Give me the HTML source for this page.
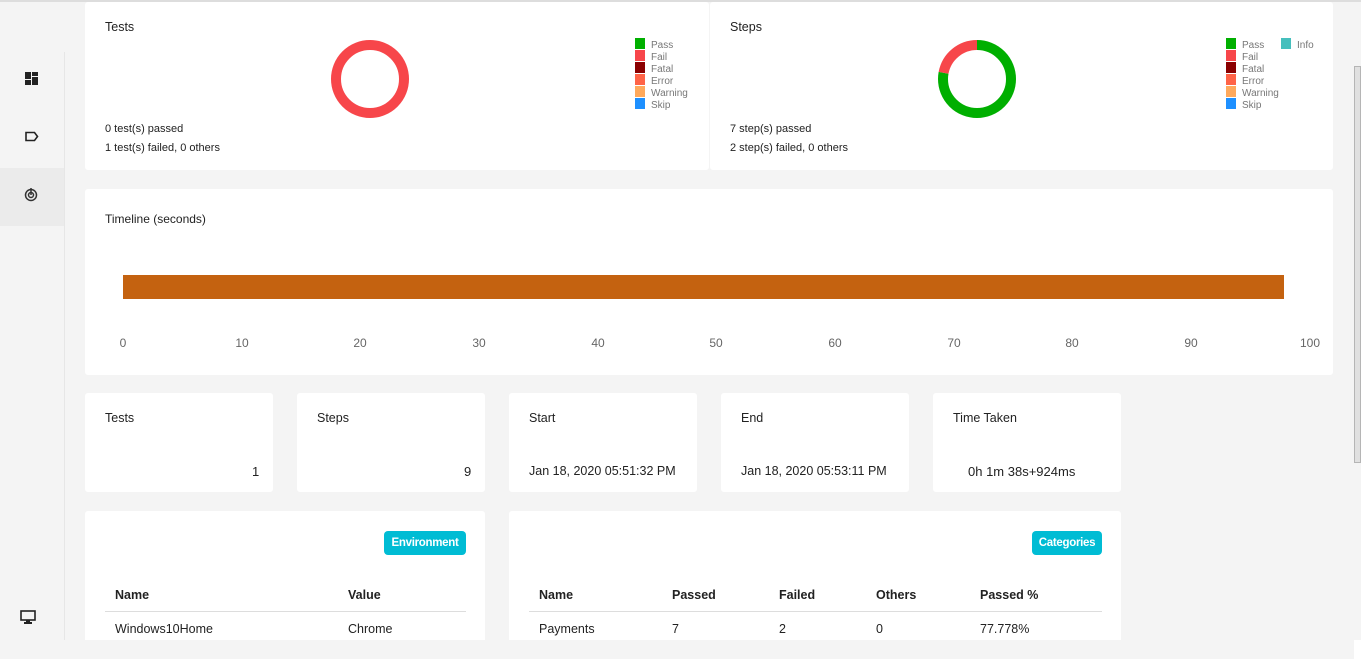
<!DOCTYPE html>
<html><head><meta charset="utf-8"><style>
*{margin:0;padding:0;box-sizing:border-box}
body{width:1361px;height:659px;background:#f4f4f4;font-family:"Liberation Sans",sans-serif;font-size:12px;color:#222;position:relative;overflow:hidden}
.a{position:absolute}
.card{position:absolute;background:#fff;border-radius:3px}
.t{position:absolute;font-size:12.5px;color:#222}
.lg{position:absolute;font-size:10px;color:#777;line-height:12px}
.lg div{height:12px;white-space:nowrap}
.lg i{display:inline-block;width:10px;height:11px;margin-right:6px;vertical-align:-1px}
.ax{position:absolute;top:336px;font-size:12px;color:#666;transform:translateX(-50%)}
.badge{position:absolute;background:#00bcd4;color:#fff;font-weight:bold;font-size:11.5px;border-radius:4px;height:24px;line-height:24px;text-align:center;white-space:nowrap;letter-spacing:-0.3px}
</style></head><body>
<div class="a" style="left:0;top:0;width:1361px;height:2px;background:#ddd"></div>
<div class="a" style="left:64px;top:52px;width:1px;height:588px;background:#e6e6e6"></div>
<div class="a" style="left:0;top:168px;width:64px;height:58px;background:#ebebeb"></div>
<svg class="a" style="left:25px;top:72px" width="13" height="13" viewBox="0 0 13 13"><rect x="0" y="0" width="6" height="7" fill="#222"/><rect x="7" y="0" width="6" height="4" fill="#222"/><rect x="0" y="8" width="6" height="5" fill="#222"/><rect x="7" y="5" width="6" height="8" fill="#222"/></svg>
<svg class="a" style="left:25px;top:131px" width="14" height="11" viewBox="0 0 14 11"><path d="M1 1.5h8.5l3 4-3 4H1z" fill="none" stroke="#222" stroke-width="1.6"/></svg>
<svg class="a" style="left:24px;top:187px" width="14" height="15" viewBox="0 0 14 15"><circle cx="7" cy="8" r="5.5" fill="none" stroke="#333" stroke-width="1.5"/><circle cx="7" cy="8" r="2.5" fill="none" stroke="#333" stroke-width="1.5"/><path d="M7 1v7" stroke="#333" stroke-width="1.5"/></svg>
<svg class="a" style="left:20px;top:610px" width="16" height="15" viewBox="0 0 16 15"><rect x="1" y="1" width="14" height="9" fill="none" stroke="#222" stroke-width="1.6"/><rect x="6" y="10" width="4" height="2" fill="#222"/><rect x="4" y="12" width="8" height="2" fill="#222"/></svg>

<div class="card" style="left:85px;top:2px;width:624px;height:168px"></div>
<div class="card" style="left:710px;top:2px;width:623px;height:168px"></div>
<div class="t" style="left:105px;top:20px">Tests</div>
<div class="t" style="left:730px;top:20px">Steps</div>
<svg class="a" style="left:330px;top:39px" width="80" height="80"><circle cx="40" cy="40" r="34" fill="none" stroke="#f7464a" stroke-width="10"/></svg>
<svg class="a" style="left:937px;top:39px" width="80" height="80"><g transform="rotate(-90 40 40)"><circle cx="40" cy="40" r="34" fill="none" stroke="#00af00" stroke-width="10" stroke-dasharray="166.2 300"/><circle cx="40" cy="40" r="34" fill="none" stroke="#f7464a" stroke-width="10" stroke-dasharray="0 166.2 47.5 300"/></g></svg>
<div class="lg" style="left:635px;top:38px">
<div><i style="background:#00af00"></i>Pass</div><div><i style="background:#f7464a"></i>Fail</div><div><i style="background:#8b0000"></i>Fatal</div><div><i style="background:#ff6347"></i>Error</div><div><i style="background:#ffa95c"></i>Warning</div><div><i style="background:#1e90ff"></i>Skip</div></div>
<div class="lg" style="left:1226px;top:38px">
<div><i style="background:#00af00"></i>Pass</div><div><i style="background:#f7464a"></i>Fail</div><div><i style="background:#8b0000"></i>Fatal</div><div><i style="background:#ff6347"></i>Error</div><div><i style="background:#ffa95c"></i>Warning</div><div><i style="background:#1e90ff"></i>Skip</div></div>
<div class="lg" style="left:1281px;top:38px"><div><i style="background:#46bfbd"></i>Info</div></div>
<div class="t" style="left:105px;top:123px;font-size:11px">0 test(s) passed</div>
<div class="t" style="left:105px;top:142px;font-size:11px">1 test(s) failed, 0 others</div>
<div class="t" style="left:730px;top:123px;font-size:11px">7 step(s) passed</div>
<div class="t" style="left:730px;top:142px;font-size:11px">2 step(s) failed, 0 others</div>

<div class="card" style="left:85px;top:189px;width:1248px;height:186px"></div>
<div class="t" style="left:105px;top:212px;font-size:12px">Timeline (seconds)</div>
<div class="a" style="left:123px;top:275px;width:1161px;height:24px;background:#c46210"></div>
<div class="ax" style="left:123px">0</div><div class="ax" style="left:242px">10</div><div class="ax" style="left:360px">20</div><div class="ax" style="left:479px">30</div><div class="ax" style="left:598px">40</div><div class="ax" style="left:716px">50</div><div class="ax" style="left:835px">60</div><div class="ax" style="left:954px">70</div><div class="ax" style="left:1072px">80</div><div class="ax" style="left:1191px">90</div><div class="ax" style="left:1310px">100</div>

<div class="card" style="left:85px;top:393px;width:188px;height:99px"></div>
<div class="card" style="left:297px;top:393px;width:188px;height:99px"></div>
<div class="card" style="left:509px;top:393px;width:188px;height:99px"></div>
<div class="card" style="left:721px;top:393px;width:188px;height:99px"></div>
<div class="card" style="left:933px;top:393px;width:188px;height:99px"></div>
<div class="t" style="left:105px;top:411px">Tests</div>
<div class="t" style="left:317px;top:411px">Steps</div>
<div class="t" style="left:529px;top:411px">Start</div>
<div class="t" style="left:741px;top:411px">End</div>
<div class="t" style="left:953px;top:411px">Time Taken</div>
<div class="t" style="left:252px;top:464px;font-size:13px">1</div>
<div class="t" style="left:464px;top:464px;font-size:13px">9</div>
<div class="t" style="left:529px;top:464px;font-size:12.5px">Jan 18, 2020 05:51:32 PM</div>
<div class="t" style="left:741px;top:464px;font-size:12.5px">Jan 18, 2020 05:53:11 PM</div>
<div class="t" style="left:968px;top:464px;font-size:13px">0h 1m 38s+924ms</div>

<div class="card" style="left:85px;top:511px;width:400px;height:135px"></div>
<div class="card" style="left:509px;top:511px;width:612px;height:135px"></div>
<div class="badge" style="left:384px;top:531px;width:82px">Environment</div>
<div class="badge" style="left:1032px;top:531px;width:70px">Categories</div>
<div class="a" style="left:105px;top:611px;width:361px;height:1px;background:#ddd"></div>
<div class="a" style="left:529px;top:611px;width:573px;height:1px;background:#ddd"></div>
<div class="t" style="left:115px;top:588px;font-weight:bold">Name</div>
<div class="t" style="left:348px;top:588px;font-weight:bold">Value</div>
<div class="t" style="left:115px;top:622px">Windows10Home</div>
<div class="t" style="left:348px;top:622px">Chrome</div>
<div class="t" style="left:539px;top:588px;font-weight:bold">Name</div>
<div class="t" style="left:672px;top:588px;font-weight:bold">Passed</div>
<div class="t" style="left:779px;top:588px;font-weight:bold">Failed</div>
<div class="t" style="left:876px;top:588px;font-weight:bold">Others</div>
<div class="t" style="left:980px;top:588px;font-weight:bold">Passed %</div>
<div class="t" style="left:539px;top:622px">Payments</div>
<div class="t" style="left:672px;top:622px">7</div>
<div class="t" style="left:779px;top:622px">2</div>
<div class="t" style="left:876px;top:622px">0</div>
<div class="t" style="left:980px;top:622px">77.778%</div>

<div class="a" style="left:0;top:640px;width:1361px;height:19px;background:#f4f4f4"></div>
<div class="a" style="left:1354px;top:66px;width:7px;height:397px;background:#e0e0e0;border:1px solid #b5b5b5"></div>
<div class="a" style="left:1354px;top:640px;width:7px;height:19px;background:#fff"></div>
</body></html>
